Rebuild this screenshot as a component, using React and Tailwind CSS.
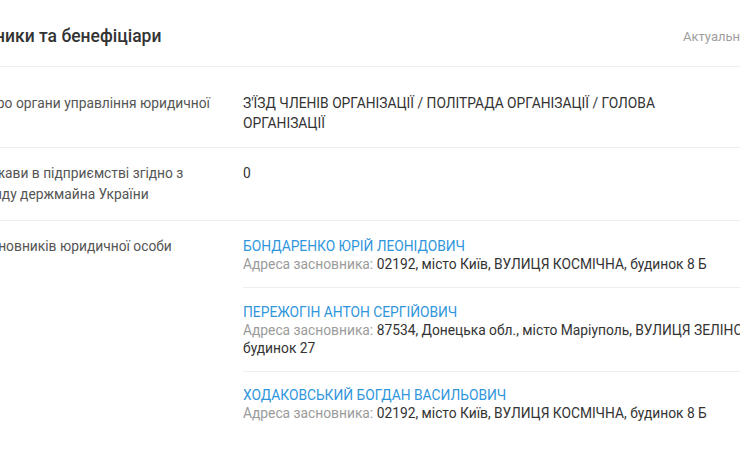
export default function App() {
  const founders = [
    {
      name: "БОНДАРЕНКО ЮРІЙ ЛЕОНІДОВИЧ",
      addr: "02192, місто Київ, ВУЛИЦЯ КОСМІЧНА, будинок 8 Б",
    },
    {
      name: "ПЕРЕЖОГІН АНТОН СЕРГІЙОВИЧ",
      addr: "87534, Донецька обл., місто Маріуполь, ВУЛИЦЯ ЗЕЛІНСЬКОГО, будинок 27",
    },
    {
      name: "ХОДАКОВСЬКИЙ БОГДАН ВАСИЛЬОВИЧ",
      addr: "02192, місто Київ, ВУЛИЦЯ КОСМІЧНА, будинок 8 Б",
    },
  ];
  return (
    <div className="w-[740px] h-[460px] overflow-hidden bg-white font-['Roboto',sans-serif]">
      <div className="ml-[-78px] w-[900px]">
        <div className="flex items-center h-[67px] border-b border-[#eeeeee] pt-[7px]">
          <div className="w-[761px] shrink-0 pl-[14px]">
            <h2 className="text-[17.5px] font-medium text-[#333333]">Засновники та бенефіціари</h2>
          </div>
          <span className="text-[13px] text-[#9e9e9e] whitespace-nowrap">Актуально на 12.03.2024</span>
        </div>
        <div className="pt-[11px]">
          <div className="flex border-b border-[#eeeeee] pt-[15px] pb-[14px]">
            <div className="w-[321px] shrink-0 pr-[20px] text-[13.8px] leading-[20px] text-[#555555]">
              Відомості про органи управління юридичної особи
            </div>
            <div className="w-[480px] text-[13.8px] leading-[20px] text-[#333333]">
              З'ЇЗД ЧЛЕНІВ ОРГАНІЗАЦІЇ / ПОЛІТРАДА ОРГАНІЗАЦІЇ / ГОЛОВА ОРГАНІЗАЦІЇ
            </div>
          </div>
        </div>
        <div className="flex border-b border-[#eeeeee] py-[15px]">
          <div className="w-[321px] shrink-0 pr-[20px] text-[13.8px] leading-[21px] text-[#555555]">
            Частка держави в підприємстві згідно з даними Фонду держмайна України
          </div>
          <div className="text-[13.8px] leading-[21px] text-[#333333]">0</div>
        </div>
        <div className="flex pt-[15px]">
          <div className="w-[321px] shrink-0 pr-[20px] text-[13.8px] leading-[21px] text-[#555555]">
            Перелік засновників юридичної особи
          </div>
          <div className="w-[560px] flex flex-col">
            {founders.map((f, i) => (
              <div
                key={i}
                className={
                  i === 0
                    ? "pt-px pb-[14px] border-b border-[#eeeeee] text-[13.8px] leading-[18px]"
                    : i === 1
                    ? "pt-[15px] pb-[14px] border-b border-[#eeeeee] text-[13.8px] leading-[18px]"
                    : "pt-[14px] text-[13.8px] leading-[18px]"
                }
              >
                <div className="text-[#3096dc]">{f.name}</div>
                <div className="text-[#333333]">
                  <span className="text-[#9b9b9b]">Адреса засновника: </span>
                  {f.addr}
                </div>
              </div>
            ))}
          </div>
        </div>
      </div>
    </div>
  );
}
